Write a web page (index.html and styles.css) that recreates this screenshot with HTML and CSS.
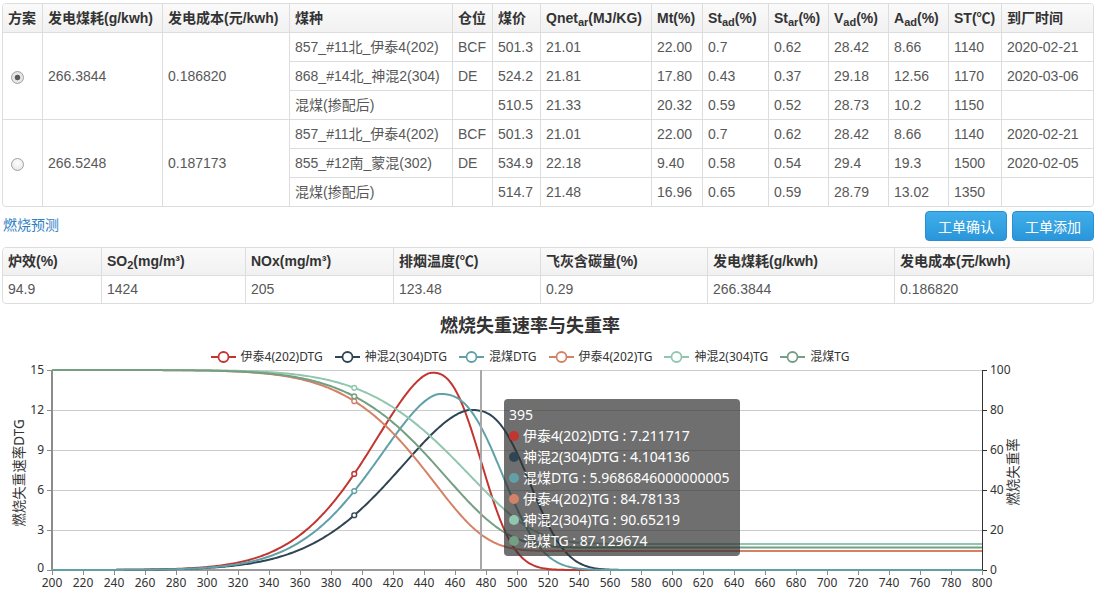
FILE: index.html
```html
<!DOCTYPE html>
<html lang="zh-CN">
<head>
<meta charset="utf-8">
<title>燃烧预测</title>
<link rel="stylesheet" href="styles.css">
</head>
<body>
<div class="page">
  <div class="tbl-wrap">
    <table class="data-table plan-table">
      <colgroup>
        <col class="p1"><col class="p2"><col class="p3"><col class="p4"><col class="p5"><col class="p6"><col class="p7">
        <col class="p8"><col class="p9"><col class="p10"><col class="p11"><col class="p12"><col class="p13"><col class="p14">
      </colgroup>
      <thead>
        <tr>
          <th class="first">方案</th><th>发电煤耗(g/kwh)</th><th>发电成本(元/kwh)</th><th>煤种</th><th>仓位</th><th>煤价</th>
          <th>Qnet<sub>ar</sub>(MJ/KG)</th><th>Mt(%)</th><th>St<sub>ad</sub>(%)</th><th>St<sub>ar</sub>(%)</th><th>V<sub>ad</sub>(%)</th><th>A<sub>ad</sub>(%)</th><th>ST(℃)</th><th>到厂时间</th>
        </tr>
      </thead>
      <tbody>
        <tr>
          <td class="first" rowspan="3"><span class="radio on"></span></td><td rowspan="3">266.3844</td><td rowspan="3">0.186820</td>
          <td>857_#11北_伊泰4(202)</td><td>BCF</td><td>501.3</td><td>21.01</td><td>22.00</td><td>0.7</td><td>0.62</td><td>28.42</td><td>8.66</td><td>1140</td><td>2020-02-21</td>
        </tr>
        <tr>
          <td>868_#14北_神混2(304)</td><td>DE</td><td>524.2</td><td>21.81</td><td>17.80</td><td>0.43</td><td>0.37</td><td>29.18</td><td>12.56</td><td>1170</td><td>2020-03-06</td>
        </tr>
        <tr>
          <td>混煤(掺配后)</td><td></td><td>510.5</td><td>21.33</td><td>20.32</td><td>0.59</td><td>0.52</td><td>28.73</td><td>10.2</td><td>1150</td><td></td>
        </tr>
        <tr>
          <td class="first" rowspan="3"><span class="radio"></span></td><td rowspan="3">266.5248</td><td rowspan="3">0.187173</td>
          <td>857_#11北_伊泰4(202)</td><td>BCF</td><td>501.3</td><td>21.01</td><td>22.00</td><td>0.7</td><td>0.62</td><td>28.42</td><td>8.66</td><td>1140</td><td>2020-02-21</td>
        </tr>
        <tr>
          <td>855_#12南_蒙混(302)</td><td>DE</td><td>534.9</td><td>22.18</td><td>9.40</td><td>0.58</td><td>0.54</td><td>29.4</td><td>19.3</td><td>1500</td><td>2020-02-05</td>
        </tr>
        <tr>
          <td>混煤(掺配后)</td><td></td><td>514.7</td><td>21.48</td><td>16.96</td><td>0.65</td><td>0.59</td><td>28.79</td><td>13.02</td><td>1350</td><td></td>
        </tr>
      </tbody>
    </table>
  </div>

  <div class="toolbar">
    <a class="section-link">燃烧预测</a>
    <div class="btns">
      <button class="btn">工单确认</button>
      <button class="btn">工单添加</button>
    </div>
  </div>

  <div class="tbl-wrap">
    <table class="data-table pred-table">
      <colgroup>
        <col class="q1"><col class="q2"><col class="q3"><col class="q4"><col class="q5"><col class="q6"><col class="q7">
      </colgroup>
      <thead>
        <tr>
          <th class="first">炉效(%)</th><th>SO<sub>2</sub>(mg/m³)</th><th>NOx(mg/m³)</th><th>排烟温度(℃)</th><th>飞灰含碳量(%)</th><th>发电煤耗(g/kwh)</th><th>发电成本(元/kwh)</th>
        </tr>
      </thead>
      <tbody>
        <tr>
          <td class="first">94.9</td><td>1424</td><td>205</td><td>123.48</td><td>0.29</td><td>266.3844</td><td>0.186820</td>
        </tr>
      </tbody>
    </table>
  </div>
</div>

<div class="chart">
  <div class="chart-title">燃烧失重速率与失重率</div>
  <div class="legend">
    <span class="lg-item"><svg class="lg-icon" viewBox="0 0 25 14"><line class="sr1" x1="0" y1="7" x2="25" y2="7"/><circle class="sr1" cx="12.5" cy="7" r="5"/></svg>伊泰4(202)DTG</span>
    <span class="lg-item"><svg class="lg-icon" viewBox="0 0 25 14"><line class="sr2" x1="0" y1="7" x2="25" y2="7"/><circle class="sr2" cx="12.5" cy="7" r="5"/></svg>神混2(304)DTG</span>
    <span class="lg-item"><svg class="lg-icon" viewBox="0 0 25 14"><line class="sr3" x1="0" y1="7" x2="25" y2="7"/><circle class="sr3" cx="12.5" cy="7" r="5"/></svg>混煤DTG</span>
    <span class="lg-item"><svg class="lg-icon" viewBox="0 0 25 14"><line class="sr4" x1="0" y1="7" x2="25" y2="7"/><circle class="sr4" cx="12.5" cy="7" r="5"/></svg>伊泰4(202)TG</span>
    <span class="lg-item"><svg class="lg-icon" viewBox="0 0 25 14"><line class="sr5" x1="0" y1="7" x2="25" y2="7"/><circle class="sr5" cx="12.5" cy="7" r="5"/></svg>神混2(304)TG</span>
    <span class="lg-item"><svg class="lg-icon" viewBox="0 0 25 14"><line class="sr6" x1="0" y1="7" x2="25" y2="7"/><circle class="sr6" cx="12.5" cy="7" r="5"/></svg>混煤TG</span>
  </div>
  <svg class="plot" width="1060" height="227" viewBox="0 0 1060 227">
    <g id="plot-g" transform="translate(0,-365)">
      <text class="axis-name" transform="translate(19,473) rotate(-90)" text-anchor="middle" dy="0.35em">燃烧失重速率DTG</text>
      <text class="axis-name" transform="translate(1013,472) rotate(-90)" text-anchor="middle" dy="0.35em">燃烧失重率</text>
    </g>
  </svg>
  <div class="tooltip">
    <div class="tt-row">395</div>
    <div class="tt-row"><span class="dot d1"></span>伊泰4(202)DTG : 7.211717</div>
    <div class="tt-row"><span class="dot d2"></span>神混2(304)DTG : 4.104136</div>
    <div class="tt-row"><span class="dot d3"></span>混煤DTG : 5.9686846000000005</div>
    <div class="tt-row"><span class="dot d4"></span>伊泰4(202)TG : 84.78133</div>
    <div class="tt-row"><span class="dot d5"></span>神混2(304)TG : 90.65219</div>
    <div class="tt-row"><span class="dot d6"></span>混煤TG : 87.129674</div>
  </div>
</div>
<script src="chart.js"></script>
</body>
</html>
```

FILE: styles.css
```css
* { box-sizing: border-box; }
html, body { margin: 0; padding: 0; }
body {
  width: 1102px;
  height: 592px;
  overflow: hidden;
  background: #fff;
  color: #585858;
  font-family: "Liberation Sans", "Noto Sans CJK SC", sans-serif;
  font-size: 14px;
}
.page { padding: 3px 0 0 2px; }

.tbl-wrap {
  width: 1092px;
  border: 1px solid #ddd;
  border-radius: 4px;
  overflow: hidden;
}
.data-table {
  width: 1090px;
  table-layout: fixed;
  border-collapse: separate;
  border-spacing: 0;
}
.data-table th,
.data-table td {
  padding: 4px 5px;
  line-height: 20px;
  text-align: left;
  vertical-align: middle;
  border-left: 1px solid #ddd;
  white-space: nowrap;
  overflow: hidden;
}
.data-table .first { border-left: 0; }
.data-table tbody td { border-top: 1px solid #ddd; }
.data-table th {
  font-weight: bold;
  color: #333;
  background: linear-gradient(#fafafa, #f1f1f1);
}
.pred-table th, .pred-table td { line-height: 19px; }
sub { font-size: 11px; line-height: 0; vertical-align: -3px; }

.p1 { width: 39px; } .p2 { width: 120px; } .p3 { width: 127px; } .p4 { width: 163px; }
.p5 { width: 40px; } .p6 { width: 48px; } .p7 { width: 111px; } .p8 { width: 51px; }
.p9 { width: 66px; } .p10 { width: 60px; } .p11 { width: 60px; } .p12 { width: 60px; }
.p13 { width: 53px; } .p14 { width: 92px; }
.q1 { width: 98px; } .q2 { width: 144px; } .q3 { width: 148px; } .q4 { width: 147px; }
.q5 { width: 167px; } .q6 { width: 187px; } .q7 { width: 199px; }

.radio {
  display: inline-block;
  width: 13px;
  height: 13px;
  margin-left: 3px;
  border-radius: 50%;
  border: 1px solid #a0a0a0;
  background: radial-gradient(circle at 50% 35%, #ffffff, #e2e2e2);
  vertical-align: middle;
}
.radio.on {
  background: radial-gradient(circle, #5a5a5a 0, #5a5a5a 2.4px, #e9e9e9 3.2px, #dcdcdc 100%);
}

.toolbar {
  width: 1092px;
  height: 30px;
  margin: 4px 0 6px;
  display: flex;
  justify-content: space-between;
  align-items: center;
}
.section-link {
  color: #2f80c2;
  font-family: "Noto Sans CJK SC", sans-serif;
  font-size: 14px;
  margin-left: 1px;
  margin-top: -4px;
}
.btns { display: flex; gap: 5px; }
.btn {
  width: 82px;
  height: 30px;
  padding: 0;
  border: 1px solid #2a8fd2;
  border-radius: 4px;
  background: linear-gradient(#40aeea, #2a96da);
  color: #fff;
  font-family: "Noto Sans CJK SC", sans-serif;
  font-size: 14px;
  line-height: 28px;
}

.chart { position: relative; width: 1060px; }
.chart-title {
  margin-top: 8px;
  height: 24px;
  line-height: 24px;
  text-align: center;
  font-family: "Noto Sans CJK SC", sans-serif;
  font-weight: bold;
  font-size: 18px;
  color: #333;
}
.legend {
  margin-top: 13px;
  height: 16px;
  display: flex;
  justify-content: center;
  align-items: center;
  gap: 12px;
  font-family: "Noto Sans", "Noto Sans CJK SC", sans-serif;
  font-size: 12px;
  color: #333;
}
.lg-item { display: flex; align-items: center; gap: 5px; line-height: 16px; }
.lg-icon { width: 25px; height: 14px; display: block; }
.lg-icon line { stroke-width: 2; }
.lg-icon circle { fill: #fff; stroke-width: 1.8; }

.sr1 { stroke: #c23531; } .sr2 { stroke: #2f4554; } .sr3 { stroke: #61a0a8; }
.sr4 { stroke: #d48265; } .sr5 { stroke: #91c7ae; } .sr6 { stroke: #749f83; }

.plot { display: block; overflow: visible; }
.split { stroke: #ccc; stroke-width: 1; }
.axis-l { stroke: #8c8c8c; stroke-width: 2; }
.axis-b { stroke: #9a9a9a; stroke-width: 2; }
.axis-r { stroke: #333; stroke-width: 1; }
.tick-l, .tick-b { stroke: #8c8c8c; stroke-width: 1; }
.tick-r { stroke: #333; stroke-width: 1; }
.lab {
  font-family: "Noto Sans", "Noto Sans CJK SC", sans-serif;
  font-size: 12px;
  fill: #333;
}
.lab-l { text-anchor: end; }
.lab-b { text-anchor: middle; }
.axis-name {
  font-family: "Noto Sans", "Noto Sans CJK SC", sans-serif;
  font-size: 13.5px;
  fill: #333;
}
.curve { fill: none; stroke-width: 2; stroke-linejoin: round; }
.marker { fill: #fff; stroke-width: 1.4; }
.pointer { stroke: #a8a8a8; stroke-width: 2; }

.tooltip {
  position: absolute;
  left: 504px;
  top: 87px;
  width: 236px;
  padding: 5px 5px;
  border-radius: 4px;
  background: rgba(50, 50, 50, 0.7);
  color: #fff;
  font-family: "Noto Sans", "Noto Sans CJK SC", sans-serif;
  font-size: 14px;
}
.tt-row { height: 21px; line-height: 21px; white-space: nowrap; display: flex; align-items: center; }
.dot { width: 10px; height: 10px; border-radius: 50%; margin-right: 4px; flex: none; }
.d1 { background: #c23531; } .d2 { background: #2f4554; } .d3 { background: #61a0a8; }
.d4 { background: #d48265; } .d5 { background: #91c7ae; } .d6 { background: #749f83; }
```

FILE: chart.js
```js
(function () {
  var NS = 'http://www.w3.org/2000/svg';
  var root = document.getElementById('plot-g');
  var X0 = 52, X1 = 982, YT = 370, YB = 570, T0 = 200, T1 = 800;

  function px(t) { return X0 + (t - T0) / (T1 - T0) * (X1 - X0); }
  function pyL(v) { return YB - v / 15 * (YB - YT); }
  function pyR(v) { return YB - v / 100 * (YB - YT); }
  function add(name, attrs, text) {
    var e = document.createElementNS(NS, name);
    for (var k in attrs) { e.setAttribute(k, attrs[k]); }
    if (text != null) { e.textContent = text; }
    root.appendChild(e);
    return e;
  }

  var i, y, t, x;
  for (i = 0; i < 5; i++) {
    y = YT + i * 40 + 0.5;
    add('line', { x1: X0, x2: X1, y1: y, y2: y, 'class': 'split' });
  }
  add('line', { x1: X0, x2: X0, y1: YT, y2: YB + 1, 'class': 'axis-l' });
  add('line', { x1: X1 + 0.5, x2: X1 + 0.5, y1: YT, y2: YB, 'class': 'axis-r' });
  add('line', { x1: X0 - 1, x2: X1, y1: YB, y2: YB, 'class': 'axis-b' });

  for (i = 0; i <= 5; i++) {
    y = YB - i * 40;
    add('line', { x1: X0 - 5, x2: X0, y1: y + 0.5, y2: y + 0.5, 'class': 'tick-l' });
    add('text', { x: X0 - 8, y: y + (i === 0 ? 2 : 4), 'class': 'lab lab-l' }, String(i * 3));
    add('line', { x1: X1, x2: X1 + 5, y1: y + 0.5, y2: y + 0.5, 'class': 'tick-r' });
    add('text', { x: X1 + 8, y: y + 4, 'class': 'lab' }, String(i * 20));
  }
  for (t = T0; t <= T1; t += 20) {
    x = Math.round(px(t)) + 0.5;
    add('line', { x1: x, x2: x, y1: YB, y2: YB + 5, 'class': 'tick-b' });
    add('text', { x: px(t), y: YB + 17, 'class': 'lab lab-b' }, String(t));
  }

  function shape(tt, p) {
    var d = tt - p.tp;
    var s = d < 0 ? p.sl : p.sr;
    var q = d < 0 ? p.pl : p.pr;
    return Math.exp(-Math.pow(Math.abs(d) / s, q));
  }

  function tgFunc(p) {
    var step = 0.25, start = 100, end = 900;
    var n = Math.round((end - start) / step);
    var cum = [0], acc = 0, prev = shape(start, p), k, cur;
    for (k = 1; k <= n; k++) {
      cur = shape(start + k * step, p);
      acc += (prev + cur) / 2 * step;
      cum.push(acc);
      prev = cur;
    }
    var total = acc;
    return function (tt) {
      var idx = (tt - start) / step;
      var j = Math.floor(idx), fr = idx - j;
      var c = cum[j] + ((cum[Math.min(j + 1, n)]) - cum[j]) * fr;
      return 100 - (100 - p.f) * c / total;
    };
  }

  var series = [
    { cls: 'sr1', type: 'dtg', A: 14.8, tp: 445, sl: 61, pl: 1.654, sr: 39, pr: 2.54 },
    { cls: 'sr2', type: 'dtg', A: 12, tp: 470, sl: 72, pl: 1.707, sr: 46, pr: 2.71 },
    { cls: 'sr3', type: 'dtg', A: 13.2, tp: 450, sl: 62.7, pl: 1.68, sr: 49, pr: 2.6 },
    { cls: 'sr4', type: 'tg', f: 9.5, tp: 445, sl: 61, pl: 1.654, sr: 40.4, pr: 2.54 },
    { cls: 'sr5', type: 'tg', f: 13, tp: 468, sl: 72, pl: 1.8, sr: 50, pr: 2.5 },
    { cls: 'sr6', type: 'tg', f: 11.2, tp: 452, sl: 66, pl: 1.7, sr: 48, pr: 2.5 }
  ];

  var markers = [];
  series.forEach(function (s) {
    var fy;
    if (s.type === 'dtg') {
      fy = function (tt) { return pyL(s.A * shape(tt, s)); };
    } else {
      var tg = tgFunc(s);
      fy = function (tt) { return pyR(tg(tt)); };
    }
    var d = '';
    for (var tt = T0; tt <= T1; tt += 1) {
      d += (tt === T0 ? 'M' : 'L') + px(tt).toFixed(2) + ' ' + fy(tt).toFixed(2);
    }
    add('path', { d: d, 'class': 'curve ' + s.cls });
    markers.push({ cls: s.cls, y: fy(395) });
  });

  markers.forEach(function (m) {
    add('circle', { cx: px(395), cy: m.y, r: 2.4, 'class': 'marker ' + m.cls });
  });

  add('line', { x1: 481, x2: 481, y1: YT, y2: YB, 'class': 'pointer' });
})();
```
